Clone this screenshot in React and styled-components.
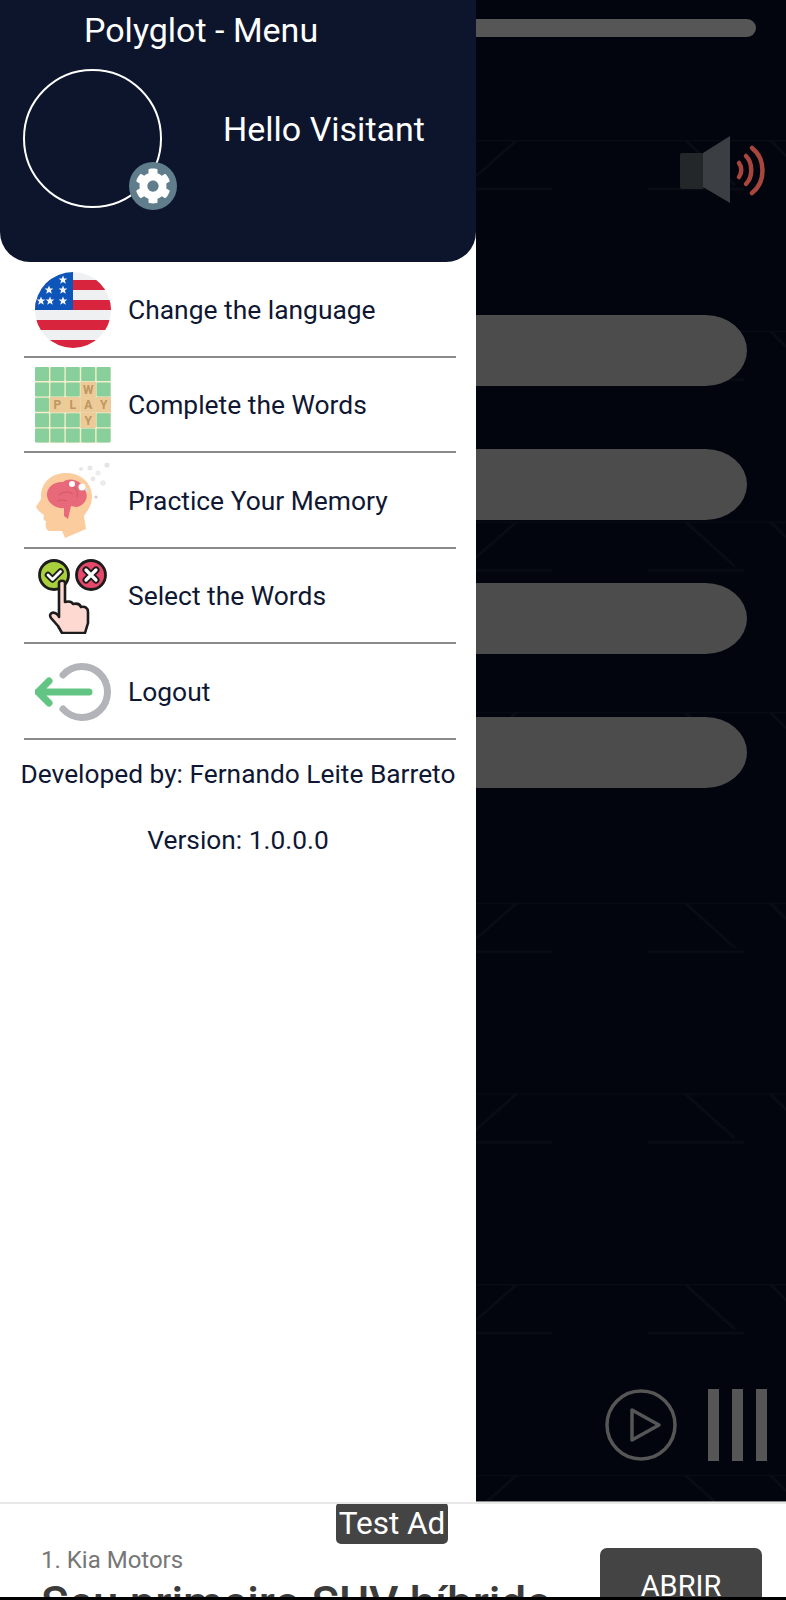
import React from 'react'
import styled, { createGlobalStyle } from 'styled-components'
import { FaCog } from 'react-icons/fa'

const GlobalStyle = createGlobalStyle`
    * { box-sizing: border-box; }
    html, body { margin: 0; padding: 0; background: #000; }
    body { font-family: Roboto, "Liberation Sans", sans-serif; }
`

const Screen = styled.div`
    width: 786px;
    height: 1600px;
    display: flex;
    flex-direction: column;
    overflow: hidden;
`

const Stage = styled.div`
    height: 1502px;
    display: flex;
    background: #02050d;
`

const Drawer = styled.nav`
    width: 476px;
    flex-shrink: 0;
    background: #fff;
    display: flex;
    flex-direction: column;
`

const DrawerHeader = styled.header`
    height: 262px;
    background: #0d152d;
    border-radius: 0 0 30px 30px;
    color: #fff;
    padding: 10px 0 0 23px;
`

const DrawerTitle = styled.h1`
    margin: 0 0 0 61px;
    font-size: 34px;
    line-height: 40px;
    font-weight: 400;
`

const Profile = styled.div`
    display: flex;
    align-items: center;
    gap: 61px;
    margin-top: 19px;
`

const Avatar = styled.div`
    position: relative;
    width: 139px;
    height: 139px;
    border: 2px solid #fff;
    border-radius: 50%;
`

const SettingsBadge = styled.span`
    position: absolute;
    left: 104px;
    top: 91px;
    width: 48px;
    height: 48px;
    border-radius: 50%;
    background: #607d8b;
    display: flex;
    align-items: center;
    justify-content: center;
    color: #fff;
    font-size: 36px;
`

const Greeting = styled.div`
    font-size: 34px;
    line-height: 40px;
    margin-top: -20px;
`

const MenuList = styled.ul`
    list-style: none;
    margin: 0;
    padding: 0 20px 0 24px;
`

const MenuRow = styled.li`
    height: 95.5px;
    display: flex;
    align-items: center;
    gap: 17px;
    padding: 2px 0 0 11px;
    border-bottom: 2px solid #8a8a8a;
    color: #0f1733;
    font-size: 26.4px;
`

const MenuIcon = styled.svg`
    width: 76px;
    height: 76px;
    flex-shrink: 0;
`

const Credit = styled.p`
    margin: ${(p) => p.$top}px 0 0;
    text-align: center;
    color: #0f1733;
    font-size: 26.3px;
    line-height: 32px;
    white-space: nowrap;
`

const GamePanel = styled.main`
    position: relative;
    flex: 1;
    display: flex;
    flex-direction: column;
    padding-top: 19px;
    border-bottom: 1px solid #8a8a8a;
    overflow: hidden;
`

const PanelPattern = styled.svg`
    position: absolute;
    inset: 0;
    width: 100%;
    height: 100%;
`

const ProgressBar = styled.div`
    position: relative;
    height: 18px;
    margin-right: 30px;
    background: #565656;
    border-radius: 0 9px 9px 0;
`

const SpeakerRow = styled.div`
    position: relative;
    display: flex;
    justify-content: flex-end;
    margin: 98px 20px 0 0;
`

const AnswerList = styled.div`
    position: relative;
    display: flex;
    flex-direction: column;
    gap: 63px;
    margin-top: 110px;
`

const AnswerBar = styled.div`
    height: 71px;
    margin-right: 39px;
    background: #4b4c4b;
    border-radius: 0 42px 42px 0 / 0 36px 36px 0;
`

const Controls = styled.div`
    position: relative;
    margin-top: auto;
    display: flex;
    justify-content: flex-end;
    align-items: center;
    gap: 31px;
    padding: 0 19px 40px 0;
`

const PauseBars = styled.div`
    display: flex;
    gap: 13px;
`

const PauseBar = styled.span`
    width: 11px;
    height: 72px;
    background: #565656;
`

const AdBanner = styled.aside`
    position: relative;
    height: 98px;
    background: #fff;
    border-top: 2px solid #e8e8e8;
    border-bottom: 3px solid #000;
    overflow: hidden;
    display: flex;
    justify-content: space-between;
    padding: 0 24px 0 41px;
`

const AdTag = styled.span`
    position: absolute;
    left: 336px;
    top: -2px;
    width: 112px;
    height: 42px;
    background: #444;
    border-radius: 5px;
    color: #fff;
    font-size: 31.5px;
    line-height: 44px;
    text-align: center;
`

const AdCopy = styled.div`
    padding-top: 42px;
`

const AdSponsor = styled.div`
    color: #777;
    font-size: 24px;
    line-height: 28px;
`

const AdHeadline = styled.div`
    color: #3c3c3c;
    font-size: 45.6px;
    font-weight: 500;
    line-height: 52px;
    margin-top: 4px;
    white-space: nowrap;
`

const AdButton = styled.button`
    width: 162px;
    height: 90px;
    margin-top: 44px;
    flex-shrink: 0;
    border: 0;
    border-radius: 7px;
    background: #444;
    color: #fff;
    font-family: inherit;
    font-size: 29px;
    line-height: 34px;
    padding: 0 0 14px;
    text-align: center;
`

const stripes = [8, 28, 48, 68]
const stars = [[28, 8], [14, 18], [28, 18], [6, 29], [15, 29], [28, 29]]

function FlagIcon() {
    return (
        <MenuIcon viewBox="0 0 76 76">
            <clipPath id="flag-clip"><circle cx="38" cy="38" r="38" /></clipPath>
            <g clipPath="url(#flag-clip)">
                <rect width="76" height="76" fill="#eef0f2" />
                {stripes.map((y) => <rect key={y} y={y} width="76" height="10" fill="#d8243c" />)}
                <rect width="38" height="38" fill="#0d55b8" />
                {stars.map(([x, y]) => (
                    <path key={`${x}-${y}`} transform={`translate(${x} ${y})`} fill="#f4f6f8"
                        d="M0-4.5 1.2-1.4 4.3-1.4 1.9.6 2.8 3.7 0 1.9-2.8 3.7-1.9.6-4.3-1.4-1.2-1.4Z" />
                ))}
            </g>
        </MenuIcon>
    )
}

const gridCells = [0, 1, 2, 3, 4]
const gridLetters = [
    { col: 3, row: 1, ch: 'W' },
    { col: 1, row: 2, ch: 'P' },
    { col: 2, row: 2, ch: 'L' },
    { col: 3, row: 2, ch: 'A' },
    { col: 4, row: 2, ch: 'Y' },
    { col: 3, row: 3, ch: 'Y' },
]

function GridIcon() {
    return (
        <MenuIcon viewBox="0 0 76 76">
            <rect width="76" height="76" rx="4" fill="#f3efcb" />
            {gridCells.map((r) => gridCells.map((c) => (
                <rect key={`${r}-${c}`} x={c * 15.4} y={r * 15.4} width="14" height="14" rx="1" fill="#88cf9c" />
            )))}
            {gridLetters.map((l, i) => (
                <g key={i}>
                    <rect x={l.col * 15.4 - 0.7} y={l.row * 15.4 - 0.7} width="15.4" height="15.4" fill="#eccb98" />
                    <text x={l.col * 15.4 + 7} y={l.row * 15.4 + 11.5} fontSize="12" fontWeight="700"
                        textAnchor="middle" fill="#bd9660" fontFamily="Roboto, sans-serif">{l.ch}</text>
                </g>
            ))}
        </MenuIcon>
    )
}

function BrainIcon() {
    return (
        <MenuIcon viewBox="0 0 76 76">
            <path fill="#fbcd9e" d="M1 44 6 36C5 20 16 10 31 10 46 10 57 20 57 34 57 43 52 48 49 53L51 66 30 75 27 68 15 68C11 68 10 63 11 58 7 57 9 54 9 52 6 50 3 48 1 44Z" />
            <path fill="#e7697a" d="M12 33C11 24 20 18 28 19 36 13 49 19 51 29 54 37 47 44 41 44L36 43 33 56 29 53 29 45C22 46 13 41 12 33Z" />
            <path fill="none" stroke="#d65a6b" strokeWidth="1.2" d="M24 32C28 28 34 28 38 31M22 38C26 36 29 37 32 38M38 24C42 26 43 30 42 34" />
            <circle cx="37" cy="21" r="3" fill="#fff" />
            <circle cx="47" cy="24" r="3.5" fill="#fff" />
            <circle cx="55" cy="5" r="2.5" fill="#e6e6e6" />
            <circle cx="63" cy="10" r="2.6" fill="#ececec" />
            <circle cx="72" cy="2" r="2.6" fill="#e4e4e4" />
            <circle cx="68" cy="20" r="2.8" fill="#ececec" />
            <circle cx="58" cy="16" r="2.4" fill="#e8e8e8" />
            <circle cx="52" cy="27" r="1.8" fill="#dcdcdc" />
            <circle cx="61" cy="34" r="1.6" fill="#cfcfcf" />
            <circle cx="46" cy="6" r="2" fill="#e8e8e8" />
        </MenuIcon>
    )
}

function SelectIcon() {
    return (
        <MenuIcon viewBox="0 0 76 76">
            <circle cx="19" cy="17" r="14.5" fill="#a9cf3c" stroke="#1c1c1c" strokeWidth="2.8" />
            <path d="M13 17 17.5 21.5 25.5 13.5" fill="none" stroke="#1c1c1c" strokeWidth="6.5" strokeLinecap="round" strokeLinejoin="round" />
            <path d="M13 17 17.5 21.5 25.5 13.5" fill="none" stroke="#fff" strokeWidth="2.8" strokeLinecap="round" strokeLinejoin="round" />
            <circle cx="56" cy="17" r="14.5" fill="#e5486a" stroke="#1c1c1c" strokeWidth="2.8" />
            <path d="M51 12 61 22M61 12 51 22" fill="none" stroke="#1c1c1c" strokeWidth="7" strokeLinecap="round" />
            <path d="M51 12 61 22M61 12 51 22" fill="none" stroke="#fff" strokeWidth="3.2" strokeLinecap="round" />
            <path fill="#fdd9d2" stroke="#1c1c1c" strokeWidth="2.6" strokeLinejoin="round"
                d="M24 25C24 22 30 22 30 25L30 44C34 43 37 44 38 46 42 45 45 46 46 49 50 48 53 50 53 54L53 65 50 75 27 75 23 68 16 60C13 56 18 52 23 57L24 59Z" />
        </MenuIcon>
    )
}

function LogoutIcon() {
    return (
        <MenuIcon viewBox="0 0 76 76">
            <path d="M28 21A25.5 25.5 0 1 1 28 55" fill="none" stroke="#b3b4ba" strokeWidth="7" strokeLinecap="round" />
            <path d="M3 38H54M14 27 3 38 14 49" fill="none" stroke="#63c584" strokeWidth="7" strokeLinecap="round" strokeLinejoin="round" />
        </MenuIcon>
    )
}

function SpeakerIcon() {
    return (
        <svg width="86" height="70" viewBox="0 0 86 70">
            <rect x="0" y="18" width="24" height="36" rx="2" fill="#24272a" />
            <path d="M23 18 50 1 50 68 23 52Z" fill="#3b3e43" />
            <g fill="none" stroke="#a8463e" strokeWidth="4.5" strokeLinecap="round">
                <path d="M59 28C62 32 62 38 59 42" />
                <path d="M66 21C73 28 73 42 66 49" />
                <path d="M72 13C86 24 86 47 72 58" />
            </g>
        </svg>
    )
}

function PlayIcon() {
    return (
        <svg width="72" height="72" viewBox="0 0 72 72" fill="none" stroke="#565656">
            <circle cx="36" cy="36" r="34" strokeWidth="3.5" />
            <path d="M27 21 54 36 27 51Z" strokeWidth="3.5" strokeLinejoin="round" />
        </svg>
    )
}

const menuItems = [
    { label: 'Change the language', Icon: FlagIcon },
    { label: 'Complete the Words', Icon: GridIcon },
    { label: 'Practice Your Memory', Icon: BrainIcon },
    { label: 'Select the Words', Icon: SelectIcon },
    { label: 'Logout', Icon: LogoutIcon },
]

function App() {
    return (
        <Screen>
            <GlobalStyle />
            <Stage>
                <Drawer>
                    <DrawerHeader>
                        <DrawerTitle>Polyglot - Menu</DrawerTitle>
                        <Profile>
                            <Avatar>
                                <SettingsBadge><FaCog /></SettingsBadge>
                            </Avatar>
                            <Greeting>Hello Visitant</Greeting>
                        </Profile>
                    </DrawerHeader>
                    <MenuList>
                        {menuItems.map(({ label, Icon }) => (
                            <MenuRow key={label}>
                                <Icon />
                                {label}
                            </MenuRow>
                        ))}
                    </MenuList>
                    <Credit $top={18}>Developed by: Fernando Leite Barreto</Credit>
                    <Credit $top={34}>Version: 1.0.0.0</Credit>
                </Drawer>
                <GamePanel>
                    <PanelPattern>
                        <defs>
                            <pattern id="tech-lines" width="310" height="190.7" patternUnits="userSpaceOnUse" patternTransform="translate(0 140)">
                                <path d="M0 0H310M41 0 0 36M0 49H76M172 49H268M209 0 259 45M294 0 310 16" fill="none" stroke="#090c14" strokeWidth="2.5" />
                            </pattern>
                        </defs>
                        <rect width="100%" height="100%" fill="url(#tech-lines)" />
                    </PanelPattern>
                    <ProgressBar />
                    <SpeakerRow><SpeakerIcon /></SpeakerRow>
                    <AnswerList>
                        {[0, 1, 2, 3].map((n) => <AnswerBar key={n} />)}
                    </AnswerList>
                    <Controls>
                        <PlayIcon />
                        <PauseBars>
                            {[0, 1, 2].map((n) => <PauseBar key={n} />)}
                        </PauseBars>
                    </Controls>
                </GamePanel>
            </Stage>
            <AdBanner>
                <AdTag>Test Ad</AdTag>
                <AdCopy>
                    <AdSponsor>1. Kia Motors</AdSponsor>
                    <AdHeadline>Seu primeiro SUV híbrido</AdHeadline>
                </AdCopy>
                <AdButton>ABRIR</AdButton>
            </AdBanner>
        </Screen>
    )
}

export default App
